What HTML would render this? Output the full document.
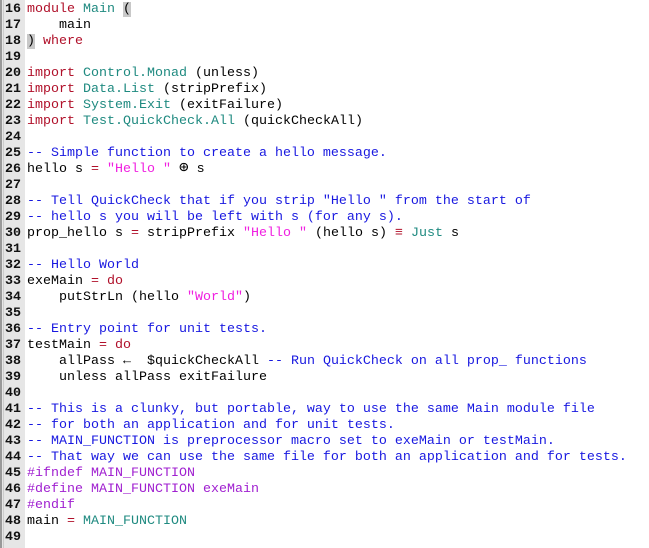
<!DOCTYPE html><html><head><style>
body{margin:0;width:649px;height:548px;overflow:hidden;background:#fff;font-family:"Liberation Mono",monospace;font-size:13.33px;}
#g{position:absolute;left:0;top:0;width:25px;height:548px;background:#e6e6e6;border-left:2px solid #999;box-sizing:border-box;}
#g:after{content:"";position:absolute;left:1px;top:0;width:1px;height:548px;background:#ccc}
#w{position:absolute;left:0;top:2px;}
.l{position:absolute;left:0;height:16px;line-height:16px;white-space:pre;}
.n{position:absolute;left:5px;width:20px;font-weight:bold;color:#111;}
.c{position:absolute;left:27px;color:#000;}
.k{color:#b0102a}.m{color:#1f8a80}.s{color:#f020e0}.cm{color:#1818e0}.p{color:#a020d0}.o{color:#b0102a}
.br{background:#c8c8c8}
.x{font-size:16px;line-height:0}
</style></head><body><div id="g"></div><div id="w">
<div class="l" style="top:0"><span class="n">16</span><span class="c"><span class="k">module</span> <span class="m">Main</span> <span class="br">(</span></span></div>
<div class="l" style="top:16px"><span class="n">17</span><span class="c">    main</span></div>
<div class="l" style="top:32px"><span class="n">18</span><span class="c"><span class="br">)</span> <span class="k">where</span></span></div>
<div class="l" style="top:48px"><span class="n">19</span></div>
<div class="l" style="top:64px"><span class="n">20</span><span class="c"><span class="k">import</span> <span class="m">Control.Monad</span> (unless)</span></div>
<div class="l" style="top:80px"><span class="n">21</span><span class="c"><span class="k">import</span> <span class="m">Data.List</span> (stripPrefix)</span></div>
<div class="l" style="top:96px"><span class="n">22</span><span class="c"><span class="k">import</span> <span class="m">System.Exit</span> (exitFailure)</span></div>
<div class="l" style="top:112px"><span class="n">23</span><span class="c"><span class="k">import</span> <span class="m">Test.QuickCheck.All</span> (quickCheckAll)</span></div>
<div class="l" style="top:128px"><span class="n">24</span></div>
<div class="l" style="top:144px"><span class="n">25</span><span class="c cm">-- Simple function to create a hello message.</span></div>
<div class="l" style="top:160px"><span class="n">26</span><span class="c">hello s <span class="o">=</span> <span class="s">"Hello "</span> <span class="x">⊕</span> s</span></div>
<div class="l" style="top:176px"><span class="n">27</span></div>
<div class="l" style="top:192px"><span class="n">28</span><span class="c cm">-- Tell QuickCheck that if you strip "Hello " from the start of</span></div>
<div class="l" style="top:208px"><span class="n">29</span><span class="c cm">-- hello s you will be left with s (for any s).</span></div>
<div class="l" style="top:224px"><span class="n">30</span><span class="c">prop_hello s <span class="o">=</span> stripPrefix <span class="s">"Hello "</span> (hello s) <span class="o">≡</span> <span class="m">Just</span> s</span></div>
<div class="l" style="top:240px"><span class="n">31</span></div>
<div class="l" style="top:256px"><span class="n">32</span><span class="c cm">-- Hello World</span></div>
<div class="l" style="top:272px"><span class="n">33</span><span class="c">exeMain <span class="o">=</span> <span class="k">do</span></span></div>
<div class="l" style="top:288px"><span class="n">34</span><span class="c">    putStrLn (hello <span class="s">"World"</span>)</span></div>
<div class="l" style="top:304px"><span class="n">35</span></div>
<div class="l" style="top:320px"><span class="n">36</span><span class="c cm">-- Entry point for unit tests.</span></div>
<div class="l" style="top:336px"><span class="n">37</span><span class="c">testMain <span class="o">=</span> <span class="k">do</span></span></div>
<div class="l" style="top:352px"><span class="n">38</span><span class="c">    allPass ←  $quickCheckAll <span class="cm">-- Run QuickCheck on all prop_ functions</span></span></div>
<div class="l" style="top:368px"><span class="n">39</span><span class="c">    unless allPass exitFailure</span></div>
<div class="l" style="top:384px"><span class="n">40</span></div>
<div class="l" style="top:400px"><span class="n">41</span><span class="c cm">-- This is a clunky, but portable, way to use the same Main module file</span></div>
<div class="l" style="top:416px"><span class="n">42</span><span class="c cm">-- for both an application and for unit tests.</span></div>
<div class="l" style="top:432px"><span class="n">43</span><span class="c cm">-- MAIN_FUNCTION is preprocessor macro set to exeMain or testMain.</span></div>
<div class="l" style="top:448px"><span class="n">44</span><span class="c cm">-- That way we can use the same file for both an application and for tests.</span></div>
<div class="l" style="top:464px"><span class="n">45</span><span class="c p">#ifndef MAIN_FUNCTION</span></div>
<div class="l" style="top:480px"><span class="n">46</span><span class="c p">#define MAIN_FUNCTION exeMain</span></div>
<div class="l" style="top:496px"><span class="n">47</span><span class="c p">#endif</span></div>
<div class="l" style="top:512px"><span class="n">48</span><span class="c">main <span class="o">=</span> <span class="m">MAIN_FUNCTION</span></span></div>
<div class="l" style="top:528px"><span class="n">49</span></div>
</div></body></html>
